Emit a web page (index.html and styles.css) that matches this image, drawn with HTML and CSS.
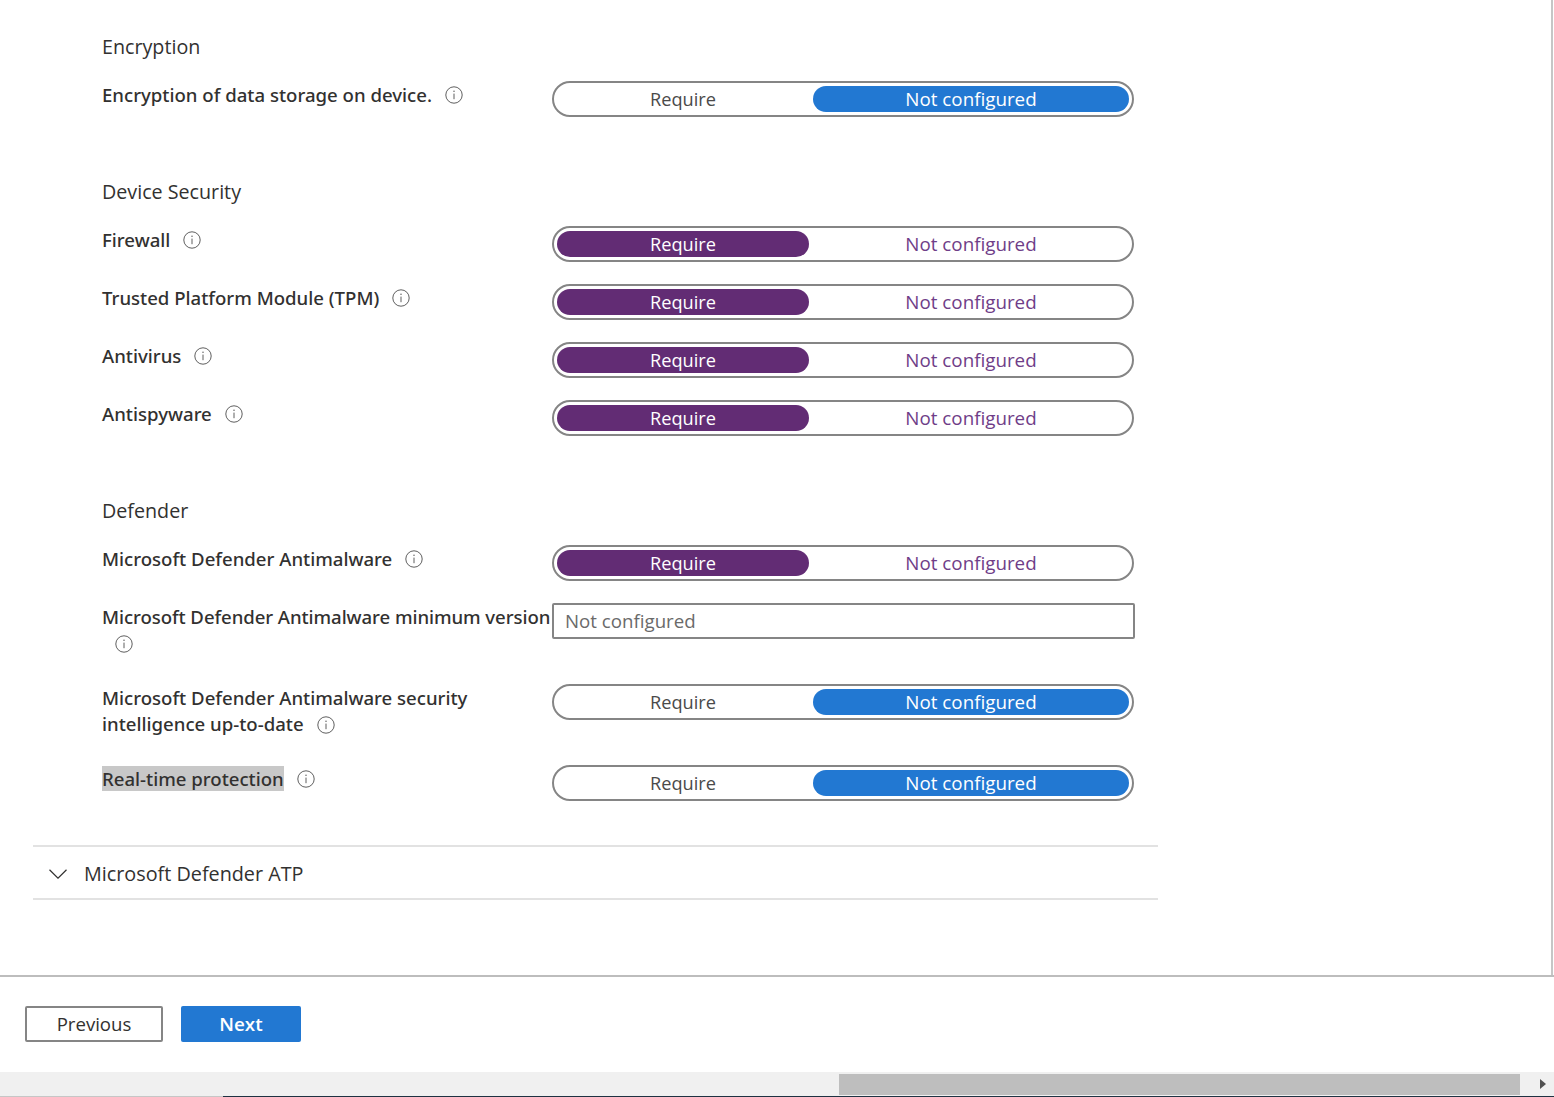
FILE: index.html
```html
<!DOCTYPE html>
<html lang="en">
<head>
<meta charset="utf-8">
<title>Compliance settings</title>
<link rel="stylesheet" href="styles.css">
</head>
<body>
<svg class="sprite" width="0" height="0" aria-hidden="true"><symbol id="info" viewBox="0 0 18 18"><circle cx="9" cy="9" r="8.2" fill="none" stroke="#5f5f5f" stroke-width="1"/><path d="M9 7.6V13.2" stroke="#5f5f5f" stroke-width="1" fill="none"/><circle cx="9" cy="5.3" r=".75" fill="#5f5f5f"/></symbol></svg>
<div class="page">
  <main class="content">
    <section class="group">
      <h2 class="heading">Encryption</h2>
      <div class="row">
        <div class="label"><span>Encryption of data storage on device.</span><svg class="info"><use href="#info"/></svg></div>
        <div class="toggle off"><span class="seg left">Require</span><span class="seg right on">Not configured</span></div>
      </div>
    </section>
    <section class="group">
      <h2 class="heading">Device Security</h2>
      <div class="row">
        <div class="label"><span>Firewall</span><svg class="info"><use href="#info"/></svg></div>
        <div class="toggle req"><span class="seg left on">Require</span><span class="seg right">Not configured</span></div>
      </div>
      <div class="row">
        <div class="label"><span>Trusted Platform Module (TPM)</span><svg class="info"><use href="#info"/></svg></div>
        <div class="toggle req"><span class="seg left on">Require</span><span class="seg right">Not configured</span></div>
      </div>
      <div class="row">
        <div class="label"><span>Antivirus</span><svg class="info"><use href="#info"/></svg></div>
        <div class="toggle req"><span class="seg left on">Require</span><span class="seg right">Not configured</span></div>
      </div>
      <div class="row">
        <div class="label"><span>Antispyware</span><svg class="info"><use href="#info"/></svg></div>
        <div class="toggle req"><span class="seg left on">Require</span><span class="seg right">Not configured</span></div>
      </div>
    </section>
    <section class="group last">
      <h2 class="heading">Defender</h2>
      <div class="row">
        <div class="label"><span>Microsoft Defender Antimalware</span><svg class="info"><use href="#info"/></svg></div>
        <div class="toggle req"><span class="seg left on">Require</span><span class="seg right">Not configured</span></div>
      </div>
      <div class="row">
        <div class="label tall"><span class="fit">Microsoft Defender Antimalware minimum version</span><svg class="info wrapped"><use href="#info"/></svg></div>
        <div class="textbox">Not configured</div>
      </div>
      <div class="row">
        <div class="label tall narrow"><span>Microsoft Defender Antimalware security intelligence up-to-date</span><svg class="info"><use href="#info"/></svg></div>
        <div class="toggle off"><span class="seg left">Require</span><span class="seg right on">Not configured</span></div>
      </div>
      <div class="row">
        <div class="label"><span class="selected">Real-time protection</span><svg class="info"><use href="#info"/></svg></div>
        <div class="toggle off"><span class="seg left">Require</span><span class="seg right on">Not configured</span></div>
      </div>
    </section>
    <div class="accordion">
      <svg class="chevron" viewBox="0 0 18 10"><path d="M.5.8 9 9.2 17.5.8" fill="none" stroke="#323130" stroke-width="1.2"/></svg>
      <span>Microsoft Defender ATP</span>
    </div>
  </main>
  <footer class="footer">
    <button class="btn secondary">Previous</button>
    <button class="btn primary">Next</button>
  </footer>
  <div class="hscroll">
    <div class="thumb"></div>
    <div class="arrow"></div>
  </div>
  <div class="edge"><div class="edge-dark"></div></div>
</div>
</body>
</html>
```
FILE: styles.css
```css
* { box-sizing: border-box; }
html, body { margin: 0; height: 100%; overflow: hidden; background: #fff; }
body { font-family: "Open Sans", "Noto Sans", sans-serif; color: #323130; font-size: 18.6px; }
.sprite { position: absolute; }
.page { height: 1097px; display: flex; flex-direction: column; }
.content { flex: 0 0 975px; padding: 33px 0 0 33px; border-right: 2px solid #c6c6c6; margin-right: 1px; overflow: hidden; }
.group { padding-left: 69px; margin-bottom: 61px; }
.group.last { margin-bottom: 45px; }
.heading { margin: 0 0 20px; font-size: 19.7px; line-height: 28px; font-weight: 400; }
.row { display: flex; width: 1032px; margin-bottom: 22px; }
.row:last-child { margin-bottom: 0; }
.label { flex: 0 0 450px; padding-top: 1px; line-height: 26px; font-family: "Noto Sans", sans-serif; font-weight: 500; white-space: nowrap; display: flex; align-items: flex-start; font-size: 18.6px; }
.label .info { flex: none; margin: 4px 0 0 13px; }
.label.tall { display: block; white-space: normal; padding-bottom: 6px; }
.label.tall .info { display: inline-block; margin: 0 0 0 13px; vertical-align: -3px; }
.label.tall .info.wrapped { display: block; margin: 5px 0 3px 13px; }
.fit { display: block; height: 26px; white-space: nowrap; letter-spacing: -0.07px; }
.label.narrow { padding-right: 60px; }
.selected { background: #c8c8c8; height: 25px; }
.info { width: 18px; height: 18px; }
.toggle { flex: 0 0 582px; height: 36px; border: 2px solid #858585; border-radius: 18px; padding: 3px; display: flex; gap: 4px; font-size: 18.2px; }
.seg { height: 26px; line-height: 26px; text-align: center; border-radius: 13px; }
.seg.left { flex: 0 0 252px; }
.seg.right { flex: 0 0 316px; font-size: 18.8px; }
.toggle.off .seg { color: #4a4a4a; }
.toggle.off .seg.on { background: #2278d2; color: #fff; }
.toggle.req .seg { color: #6f3d88; }
.toggle.req .seg.on { background: #622c74; color: #fff; }
.textbox { flex: 0 0 583px; height: 36px; border: 2px solid #858585; border-radius: 2px; padding-left: 11px; line-height: 32px; color: #6a6a6a; font-size: 18.7px; }
.accordion { width: 1125px; height: 55px; border-top: 2px solid #e2e2e2; border-bottom: 2px solid #e2e2e2; display: flex; align-items: center; padding: 2px 0 0 16px; gap: 17px; font-size: 19.8px; margin-top: -1px; }
.chevron { width: 18px; height: 10px; flex: none; }
.footer { flex: 0 0 97px; border-top: 2px solid #bdbdbd; padding: 29px 0 0 25px; display: flex; align-items: flex-start; gap: 18px; }
.btn { height: 36px; font-family: inherit; font-size: 18.6px; border-radius: 2px; padding: 0 0 2px; }
.secondary { width: 138px; background: #fff; border: 2px solid #858585; color: #323130; }
.primary { width: 120px; background: #2278d2; border: 0; color: #fff; font-weight: 600; font-size: 18.8px; padding: 0; }
.hscroll { flex: 0 0 24px; background: #f0f0f0; padding: 2px 0 0 839px; display: flex; align-items: flex-start; }
.thumb { width: 681px; height: 21px; background: #bebebe; }
.arrow { margin: 5px 0 0 20px; border-left: 6px solid #505050; border-top: 5.5px solid transparent; border-bottom: 5.5px solid transparent; }
.edge { flex: 0 0 1px; background: #c6c6c6; padding-left: 223px; }
.edge-dark { height: 1px; background: #1e3242; }
```
